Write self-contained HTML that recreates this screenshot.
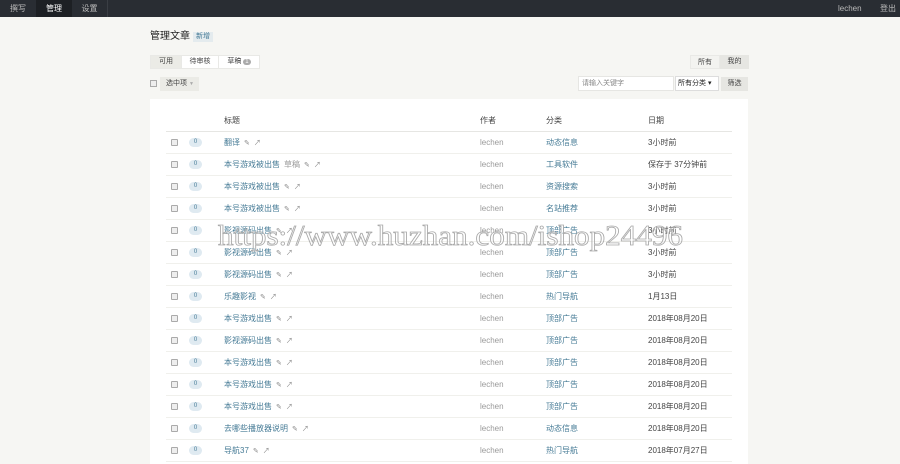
<!DOCTYPE html>
<html><head><meta charset="utf-8"><style>
*{margin:0;padding:0;box-sizing:border-box}
body{width:900px;height:464px;overflow:hidden;background:#f6f6f3;font-family:"Liberation Sans","Noto Sans CJK SC",sans-serif;font-size:8px;color:#444;position:relative}
.nav{position:absolute;left:0;top:0;width:900px;height:17px;background:#292d33;color:#bbb}
.nav span{position:absolute;top:0;line-height:17px;font-size:8px}
.a{position:absolute}
.row{position:absolute;left:166px;width:566px;height:22px;border-bottom:1px solid #f0f0ec}
.row>*{position:absolute;top:0;line-height:22px}
.cb{left:5px;top:7px!important;width:7px;height:7px;border:1px solid #aaa;border-radius:1px;background:#eee}
.bd{left:23px;top:6px!important;width:13px;height:9px;border-radius:5px;background:#dfeaf1;color:#467b96;font-size:6px;line-height:9px!important;text-align:center}
.t{left:58px;color:#467b96}
.t i{font-style:normal;color:#888;font-size:7px;margin-left:4px}
.t b{font-weight:normal;color:#999;margin-left:4px}
.au{left:314px;color:#999}
.ca{left:380px;color:#467b96}
.dt{left:482px;color:#444}
</style></head><body>
<div class="nav">
<span style="left:10px">撰写</span>
<span style="left:36px;width:36px;background:#1d2024;color:#fff;text-align:center">管理</span>
<span style="left:72px;width:36px;text-align:center;border-right:1px solid #3a3e44">设置</span>
<span style="left:838px">lechen</span>
<span style="left:880px">登出</span>
</div>
<div class="a" style="left:150px;top:30px;font-size:10px;color:#222;line-height:14px">管理文章</div>
<div class="a" style="left:193px;top:32px;background:#e4ebee;color:#467b96;padding:0 3px;line-height:10px;font-size:7px">新增</div>
<div class="a" style="left:150px;top:55px;height:14px;border:1px solid #e9e9e6;background:#fff;display:flex;font-size:7px;line-height:12px">
<span style="width:30px;text-align:center;background:#ebebe6">可用</span><span style="width:37px;text-align:center;border-left:1px solid #e9e9e6">待审核</span><span style="width:41px;text-align:center;border-left:1px solid #e9e9e6">草稿 <span style="background:#aaa;color:#fff;border-radius:3px;padding:0 2px;font-size:6px">1</span></span>
</div>
<div class="a" style="left:150px;top:80px;width:7px;height:7px;border:1px solid #aaa;background:#eee"></div>
<div class="a" style="left:160px;top:77px;width:39px;height:14px;background:#ebebe6;font-size:7px;line-height:14px;padding-left:6px">选中项 <span style="color:#aaa;font-size:5px">▼</span></div>
<div class="a" style="left:690px;top:55px;height:14px;display:flex;font-size:7px;line-height:14px"><span style="width:30px;text-align:center;background:#f3f3f0;border:1px solid #e9e9e6">所有</span><span style="width:29px;text-align:center;background:#e6e6e2">我的</span></div>
<div class="a" style="left:578px;top:76px;width:96px;height:15px;background:#fff;border:1px solid #e6e6e3;font-size:7px;color:#888;line-height:13px;padding-left:3px">请输入关键字</div>
<div class="a" style="left:675px;top:76px;width:44px;height:15px;background:#fff;border:1px solid #ddd;font-size:7px;color:#222;line-height:13px;padding-left:2px">所有分类 ▾</div>
<div class="a" style="left:721px;top:77px;width:27px;height:14px;background:#e6e6e2;font-size:7px;line-height:14px;text-align:center">筛选</div>
<div class="a" style="left:150px;top:99px;width:598px;height:365px;background:#fff"></div>
<div class="row" style="top:110px;border-bottom:1px solid #e6e6e3">
<span class="t" style="color:#444">标题</span><span class="au" style="color:#444">作者</span><span class="ca" style="color:#444">分类</span><span class="dt">日期</span></div>
<div id="rows"></div>
<svg class="a" style="left:0;top:0" width="900" height="464"><text x="218" y="245" textLength="465" lengthAdjust="spacingAndGlyphs" font-family="Liberation Serif" font-size="28" fill="rgba(255,255,255,0.3)" stroke="#aaa" stroke-width="0.8">https://www.huzhan.com/ishop24496</text></svg>
<script>
var d=[["翻译","动态信息","3小时前"],["本号游戏被出售<b>草稿</b>","工具软件","保存于 37分钟前"],["本号游戏被出售","资源搜索","3小时前"],["本号游戏被出售","名站推荐","3小时前"],["影视源码出售","顶部广告","3小时前"],["影视源码出售","顶部广告","3小时前"],["影视源码出售","顶部广告","3小时前"],["乐趣影视","热门导航","1月13日"],["本号游戏出售","顶部广告","2018年08月20日"],["影视源码出售","顶部广告","2018年08月20日"],["本号游戏出售","顶部广告","2018年08月20日"],["本号游戏出售","顶部广告","2018年08月20日"],["本号游戏出售","顶部广告","2018年08月20日"],["去哪些播放器说明","动态信息","2018年08月20日"],["导航37","热门导航","2018年07月27日"]];
var h="";d.forEach(function(r,i){h+='<div class="row" style="top:'+(132+i*22)+'px"><span class="cb"></span><span class="bd">0</span><span class="t">'+r[0]+'<i>✎</i><i>↗</i></span><span class="au">lechen</span><span class="ca">'+r[1]+'</span><span class="dt">'+r[2]+'</span></div>'});
document.getElementById("rows").innerHTML=h;
</script>
</body></html>
